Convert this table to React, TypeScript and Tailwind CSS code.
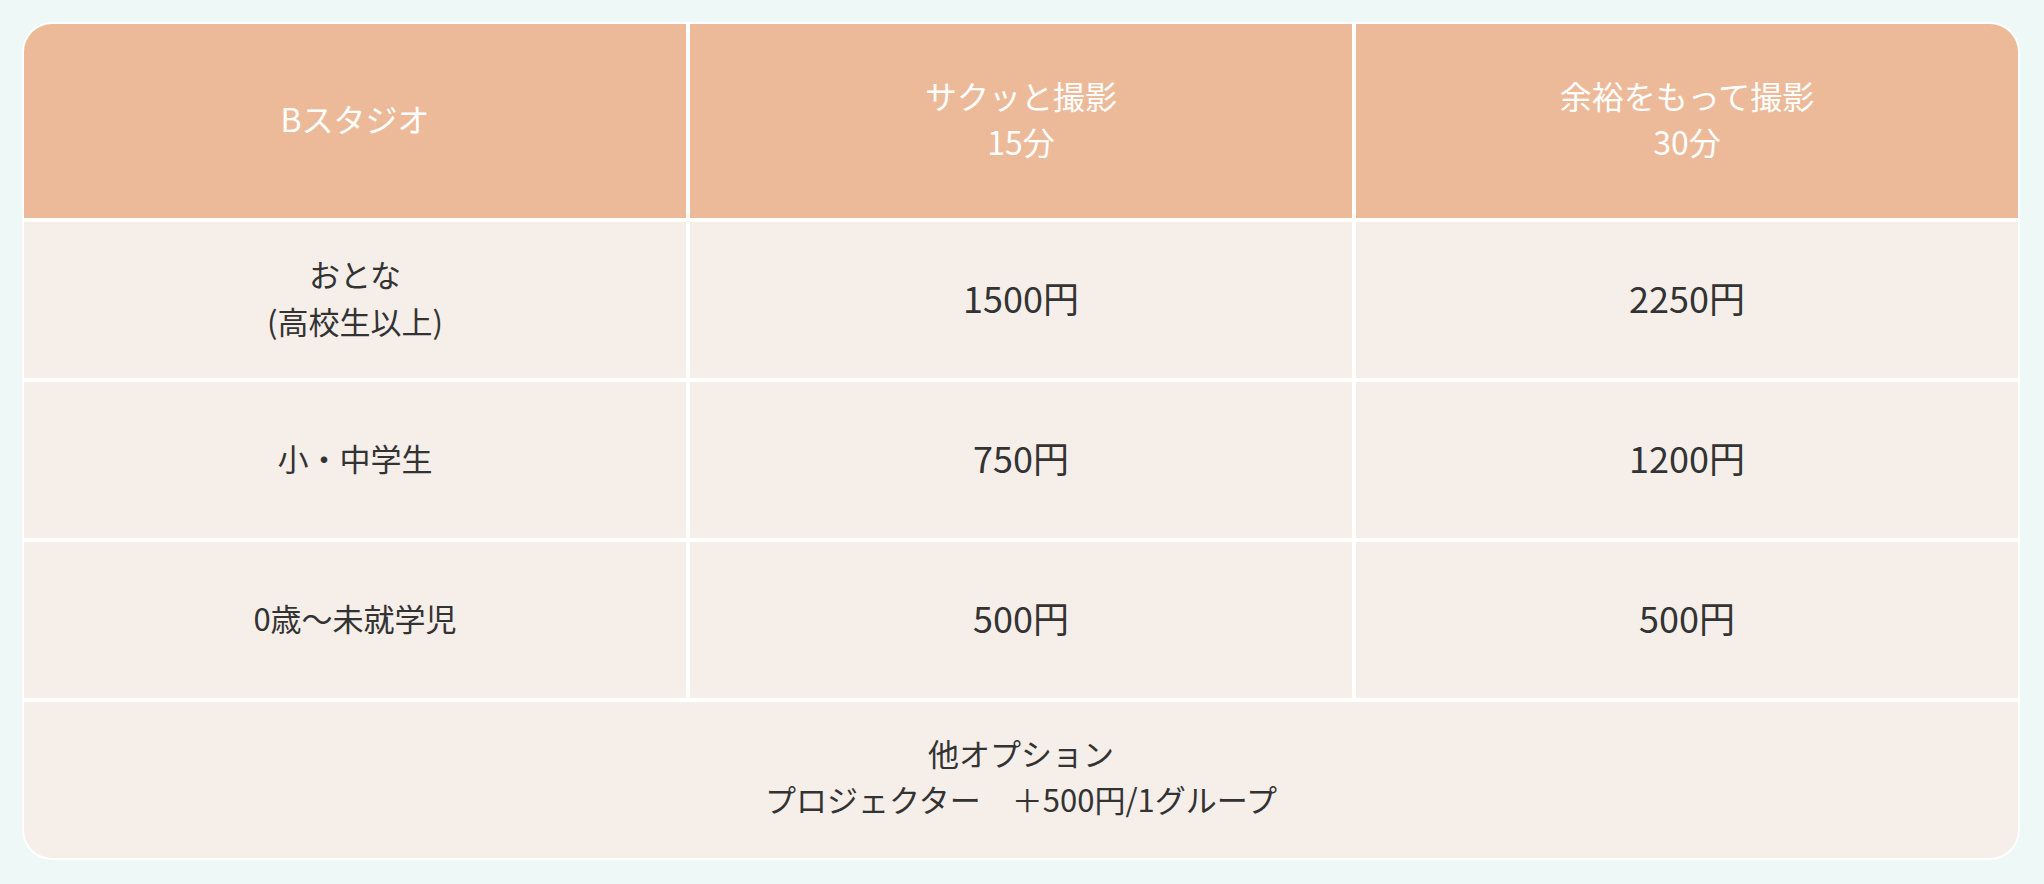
const headers = [
  { lines: ["Bスタジオ"] },
  { lines: ["サクッと撮影", "15分"] },
  { lines: ["余裕をもって撮影", "30分"] },
];

const rows = [
  { label: ["おとな", "(高校生以上)"], short: "1500円", long: "2250円" },
  { label: ["小・中学生"], short: "750円", long: "1200円" },
  { label: ["0歳〜未就学児"], short: "500円", long: "500円" },
];

const HeadCell = ({ lines }: { lines: string[] }) => (
  <div className="flex h-[194px] flex-col items-center justify-center bg-[#edba99] pb-[7px] text-center text-[32px] leading-[46px] text-white">
    {lines.map((line) => (
      <span key={line}>{line}</span>
    ))}
  </div>
);

const BodyCell = ({
  children,
  price,
}: {
  children: React.ReactNode;
  price?: boolean;
}) => (
  <div
    className={
      price
        ? "flex h-[156px] flex-col items-center justify-center bg-[#f6eee9] pb-[7px] text-center text-[36px] leading-[48px] text-[#333]"
        : "flex h-[156px] flex-col items-center justify-center bg-[#f6eee9] pb-[6px] text-center text-[31px] leading-[47px] text-[#333]"
    }
  >
    {children}
  </div>
);

export default function App() {
  return (
    <div
      className="min-h-[884px] w-full bg-[#eef8f7] pb-[24px] pl-[22px] pr-[24px] pt-[22px]"
      style={{ fontFamily: '"Noto Sans CJK JP", "Noto Sans", sans-serif' }}
    >
      <div className="overflow-hidden rounded-[30px] bg-white p-[2px]">
        <div className="grid grid-cols-3 gap-[4px] overflow-hidden rounded-[28px]">
          {headers.map((h, i) => (
            <HeadCell key={i} lines={h.lines} />
          ))}
          {rows.map((row) => (
            <div key={row.short + row.long + row.label[0]} className="contents">
              <BodyCell>
                {row.label.map((l) => (
                  <span key={l}>{l}</span>
                ))}
              </BodyCell>
              <BodyCell price>{row.short}</BodyCell>
              <BodyCell price>{row.long}</BodyCell>
            </div>
          ))}
          <div className="col-span-3 flex h-[156px] flex-col items-center justify-center bg-[#f6eee9] pb-[8px] text-center text-[31px] leading-[46px] text-[#333]">
            <span>他オプション</span>
            <span>プロジェクター　＋500円/1グループ</span>
          </div>
        </div>
      </div>
    </div>
  );
}
